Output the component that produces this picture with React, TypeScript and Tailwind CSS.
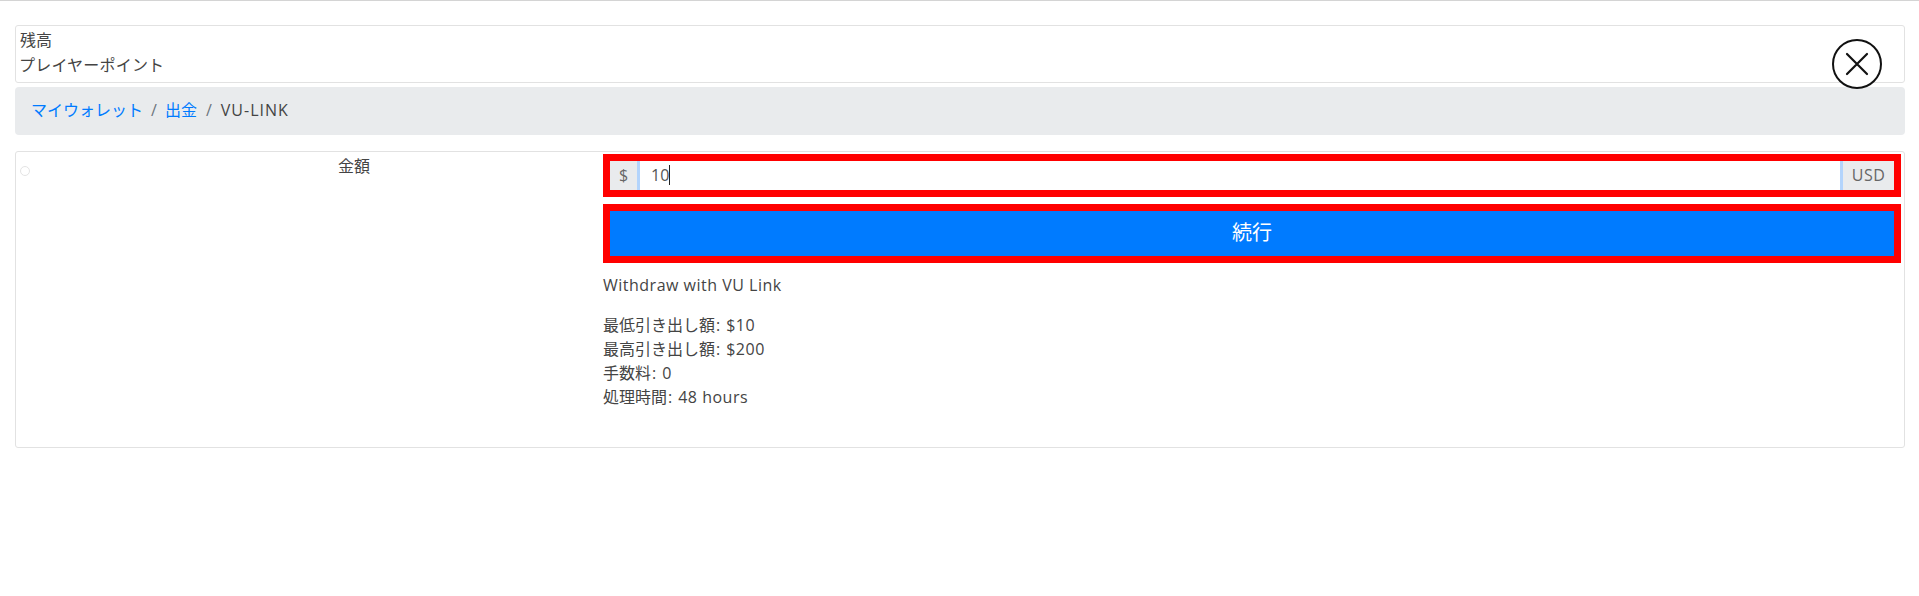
import React from 'react';

function CloseButton() {
  return (
    <svg className="absolute left-[1832px] top-[39px]" width="50" height="50" viewBox="0 0 50 50" fill="none">
      <circle cx="25" cy="25" r="24" fill="white" stroke="#111" strokeWidth="2" />
      <path d="M15 15 L35 35 M35 15 L15 35" stroke="#111" strokeWidth="2.2" strokeLinecap="round" />
    </svg>
  );
}

function InfoRow({ label, value }: { label: string; value: string }) {
  return (
    <div className="flex">
      <span>{label}</span>
      <span className="ml-[1px]">:</span>
      <span className="ml-[6px] tracking-[0.5px]">{value}</span>
    </div>
  );
}

export default function App() {
  return (
    <div className="relative h-[596px] bg-white text-[16px] text-[#444] font-['Open_Sans','Noto_Sans_CJK_JP',sans-serif]">
      <div className="h-px bg-[#d4d4d4]" />
      <div className="px-[15px] pt-[24px] pr-[14px]">
        <div className="h-[58px] rounded-[3px] border border-[#e2e2e2] pl-[3px] pt-[2px]">
          <div className="pl-[1px] leading-[24px]">残高</div>
          <div className="mt-[1px] leading-[24px] tracking-[0.2px]">プレイヤーポイント</div>
        </div>
        <div className="mt-[4px] flex h-[48px] items-center gap-[8px] rounded-[4px] bg-[#e9ebed] px-[16px] pb-[2px]">
          <a className="text-[#007bff]">マイウォレット</a>
          <span className="text-[#6c757d]">/</span>
          <a className="text-[#007bff]">出金</a>
          <span className="ml-[1px] text-[#6c757d]">/</span>
          <span className="ml-[1px] tracking-[1px]">VU-LINK</span>
        </div>
        <div className="mt-[16px] flex h-[297px] rounded-[3px] border border-[#e2e2e2]">
          <div className="flex w-[587px] shrink-0 items-start pl-[4px]">
            <span className="mt-[14px] h-[10px] w-[10px] rounded-full border border-[#e4e4e4]" />
            <span className="ml-[308px] mt-[2px] leading-[24px]">金額</span>
          </div>
          <div className="flex-1 pt-[2px] pr-[3px]">
            <div className="border-[7px] border-[#ff0000]">
              <div className="flex h-[29px] items-stretch">
                <span className="flex w-[30px] items-center justify-center border-r-[3px] border-r-[#b3d4fc] bg-[#e9ebed] pb-[2px] text-[#666]">$</span>
                <div className="flex flex-1 items-center pl-[11px] pb-[2px] text-[#555]">
                  10<span className="h-[20px] w-px bg-[#222]" />
                </div>
                <span className="flex w-[54px] items-center justify-center border-l-[3px] border-l-[#b3d4fc] bg-[#e9ebed] pb-[2px] tracking-[0.5px] text-[#666]">USD</span>
              </div>
            </div>
            <button className="mt-[7px] block w-full border-[7px] border-[#ff0000] bg-[#007bff]">
              <span className="flex h-[45px] items-center justify-center pb-[2px] text-[20px] text-white">続行</span>
            </button>
            <p className="mt-[10px] leading-[24px] tracking-[0.5px]">Withdraw with VU Link</p>
            <div className="mt-[16px] leading-[24px]">
              <InfoRow label="最低引き出し額" value="$10" />
              <InfoRow label="最高引き出し額" value="$200" />
              <InfoRow label="手数料" value="0" />
              <InfoRow label="処理時間" value="48 hours" />
            </div>
          </div>
        </div>
      </div>
      <CloseButton />
    </div>
  );
}
